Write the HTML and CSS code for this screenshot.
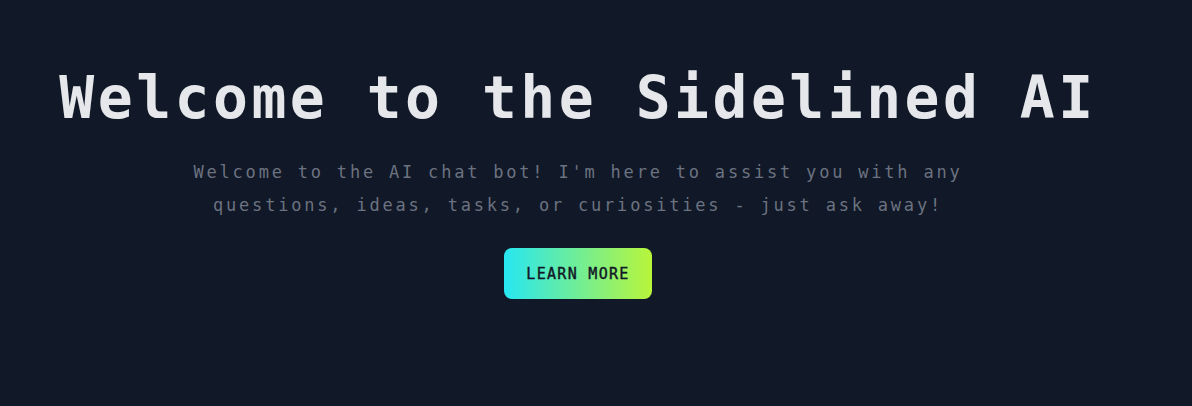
FILE: index.html
```html
<!DOCTYPE html>
<html lang="en">
<head>
<meta charset="utf-8">
<title>Sidelined AI</title>
<link rel="stylesheet" href="styles.css">
</head>
<body>
<main class="hero">
  <h1 class="hero-title">Welcome to the Sidelined AI</h1>
  <p class="hero-text">Welcome to the AI chat bot! I'm here to assist you with any questions, ideas, tasks, or curiosities - just ask away!</p>
  <a class="hero-button" href="#">LEARN MORE</a>
</main>
</body>
</html>
```

FILE: styles.css
```css
html, body {
  margin: 0;
  padding: 0;
}

body {
  background: #111827;
  min-height: 406px;
  font-family: "DejaVu Sans Mono", "Liberation Mono", monospace;
}

.hero {
  display: flex;
  flex-direction: column;
  align-items: center;
  padding: 69px 36px 0 0;
  text-align: center;
}

.hero-title {
  margin: 0;
  font-size: 58px;
  line-height: 58px;
  font-weight: 700;
  letter-spacing: 3.5px;
  color: #e5e7eb;
  white-space: nowrap;
}

.hero-text {
  margin: 29px 0 0;
  max-width: 790px;
  font-size: 17px;
  line-height: 33px;
  letter-spacing: 2.8px;
  color: #6b7280;
}

.hero-button {
  margin-top: 26px;
  width: 148px;
  height: 51px;
  display: flex;
  align-items: center;
  justify-content: center;
  border-radius: 8px;
  background: linear-gradient(to right, #27e6f2, #b9f53a);
  color: #111827;
  font-size: 15px;
  font-weight: 400;
  -webkit-text-stroke: 0.4px #111827;
  letter-spacing: 1.3px;
  text-decoration: none;
}
```
